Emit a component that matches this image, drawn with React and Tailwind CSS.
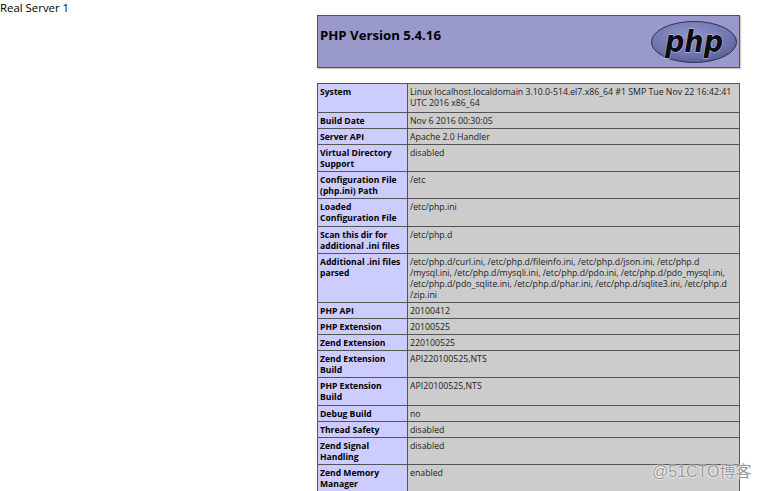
import React from 'react';

const rows = [
  ['System', <>Linux localhost.localdomain 3.10.0-514.el7.x86_64 #1 SMP Tue Nov 22 16:42:41<br />UTC 2016 x86_64</>, 'h-[29px]'],
  ['Build Date', 'Nov 6 2016 00:30:05'],
  ['Server API', 'Apache 2.0 Handler'],
  [<>Virtual Directory<br />Support</>, 'disabled'],
  [<>Configuration File<br />(php.ini) Path</>, '/etc'],
  [<>Loaded<br />Configuration File</>, '/etc/php.ini', 'h-[28px]'],
  [<>Scan this dir for<br />additional .ini files</>, '/etc/php.d'],
  [
    <>Additional .ini files<br />parsed</>,
    <>
      /etc/php.d/curl.ini, /etc/php.d/fileinfo.ini, /etc/php.d/json.ini, /etc/php.d<br />
      /mysql.ini, /etc/php.d/mysqli.ini, /etc/php.d/pdo.ini, /etc/php.d/pdo_mysql.ini,<br />
      /etc/php.d/pdo_sqlite.ini, /etc/php.d/phar.ini, /etc/php.d/sqlite3.ini, /etc/php.d<br />
      /zip.ini
    </>,
  ],
  ['PHP API', '20100412'],
  ['PHP Extension', '20100525'],
  ['Zend Extension', '220100525'],
  [<>Zend Extension<br />Build</>, 'API220100525,NTS'],
  [<>PHP Extension<br />Build</>, 'API20100525,NTS', 'h-[28px]'],
  ['Debug Build', 'no'],
  ['Thread Safety', 'disabled'],
  [<>Zend Signal<br />Handling</>, 'disabled'],
  [<>Zend Memory<br />Manager</>, 'enabled'],
];

const PhpLogo = () => (
  <svg width="86" height="42" viewBox="0 0 86 42">
    <defs>
      <radialGradient id="phpFill" cx="45%" cy="35%" r="65%">
        <stop offset="0%" stopColor="#8f95c6" />
        <stop offset="70%" stopColor="#7077b0" />
        <stop offset="100%" stopColor="#5a6098" />
      </radialGradient>
    </defs>
    <ellipse cx="43" cy="21" rx="42.5" ry="20.5" fill="url(#phpFill)" stroke="#2e3252" strokeWidth="1" />
    <text x="14" y="31" textLength="58" lengthAdjust="spacingAndGlyphs" fontFamily="'DejaVu Sans', sans-serif" fontSize="30" fontWeight="700" fontStyle="italic" fill="#0c0c14" stroke="#c9cbe6" strokeWidth="1" paintOrder="stroke">php</text>
  </svg>
);

export default function App() {
  return (
    <div className="relative h-[491px] w-[761px] overflow-hidden bg-white font-['Open_Sans','Noto_Sans',sans-serif] text-black">
      <p className="h-[15px] text-[11.4px] leading-[15px]">Real Server 1</p>

      <div className="ml-[317px] flex h-[53px] w-[423px] items-start justify-between border border-[#555] bg-[#9999cc] pl-[2px] pr-[2px] pt-[1px] shadow-[1px_1px_1px_#ccc]">
        <h1 className="mt-[9px] text-[13.2px] font-bold leading-[18px]">PHP Version 5.4.16</h1>
        <div className="mt-[4px]">
          <PhpLogo />
        </div>
      </div>

      <table className="ml-[317px] mt-[15px] w-[423px] table-fixed border-collapse text-[8.75px] leading-[11px]">
        <colgroup>
          <col className="w-[90px]" />
          <col />
        </colgroup>
        <tbody>
          {rows.map((row, idx) => (
            <tr key={idx} className={row[2]}>
              <td className="border border-[#555] bg-[#ccccff] px-[2px] pb-[1px] pt-[3px] align-top text-[8.6px] font-bold whitespace-nowrap">{row[0]}</td>
              <td className="border border-[#555] bg-[#cccccc] px-[2px] pb-[1px] pt-[3px] align-top whitespace-nowrap text-[#222]">{row[1]}</td>
            </tr>
          ))}
        </tbody>
      </table>

      {/* watermark */}
      <div className="absolute left-[652px] top-[463px] font-['Liberation_Sans','Noto_Sans_CJK_SC',sans-serif] text-[16px] leading-[18px] text-[#999] [text-shadow:0_0_2px_#fff,0_0_2px_#fff]">
        @51CTO博客
      </div>
    </div>
  );
}
